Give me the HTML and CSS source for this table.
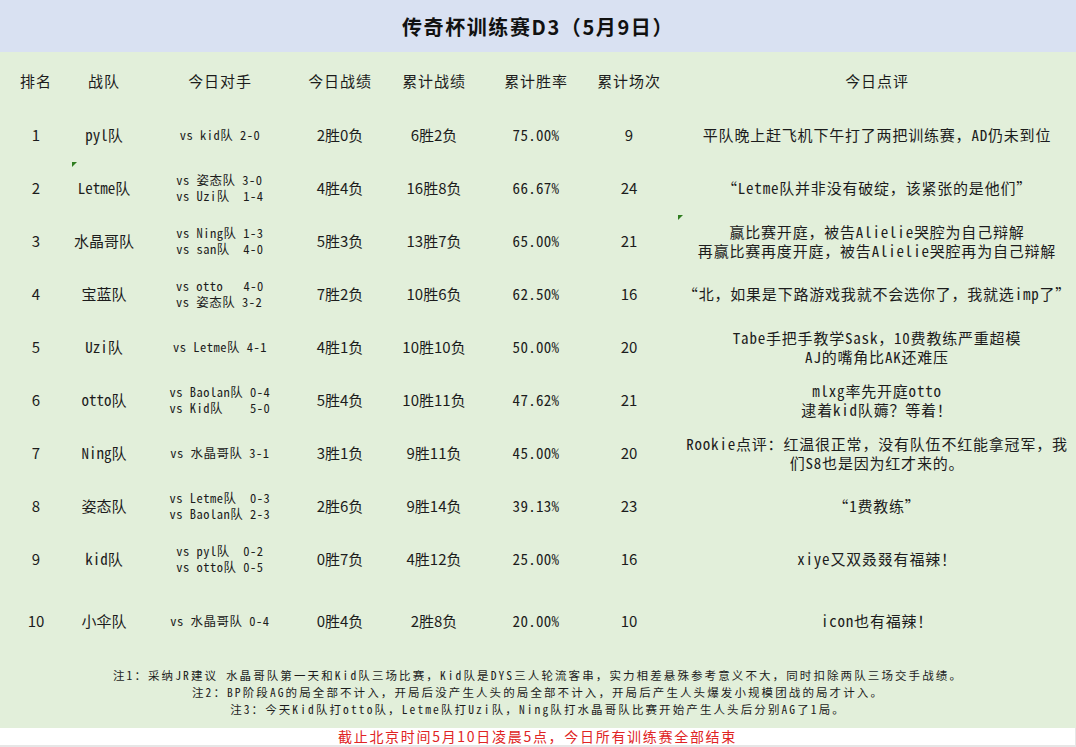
FILE: index.html
```html
<!DOCTYPE html>
<html lang="zh-CN">
<head>
<meta charset="utf-8">
<title>传奇杯训练赛D3</title>
<link rel="stylesheet" href="styles.css">
</head>
<body>
<div class="sheet">
  <div class="title">传奇杯训练赛D3（5月9日）</div>
  <div class="board">
    <div class="table">
      <div class="row head">
        <div class="c">排名</div><div class="c">战队</div><div class="c">今日对手</div><div class="c">今日战绩</div><div class="c">累计战绩</div><div class="c">累计胜率</div><div class="c">累计场次</div><div class="c">今日点评</div>
      </div>
      <div class="row">
        <div class="c num">1</div><div class="c team">pyl队</div><div class="c opp"><span class="vs">vs kid队 2-0</span></div><div class="c rec">2胜0负</div><div class="c rec">6胜2负</div><div class="c pct">75.00%</div><div class="c num">9</div><div class="c note">平队晚上赶飞机下午打了两把训练赛，AD仍未到位</div>
      </div>
      <div class="row">
        <div class="c num">2</div><div class="c team mark">Letme队</div><div class="c opp"><span class="vs">vs 姿态队 3-0
vs Uzi队  1-4</span></div><div class="c rec">4胜4负</div><div class="c rec">16胜8负</div><div class="c pct">66.67%</div><div class="c num">24</div><div class="c note">“Letme队并非没有破绽，该紧张的是他们”</div>
      </div>
      <div class="row">
        <div class="c num">3</div><div class="c team">水晶哥队</div><div class="c opp"><span class="vs">vs Ning队 1-3
vs san队  4-0</span></div><div class="c rec">5胜3负</div><div class="c rec">13胜7负</div><div class="c pct">65.00%</div><div class="c num">21</div><div class="c note mark">赢比赛开庭，被告Alielie哭腔为自己辩解<br>再赢比赛再度开庭，被告Alielie哭腔再为自己辩解</div>
      </div>
      <div class="row">
        <div class="c num">4</div><div class="c team">宝蓝队</div><div class="c opp"><span class="vs">vs otto   4-0
vs 姿态队 3-2</span></div><div class="c rec">7胜2负</div><div class="c rec">10胜6负</div><div class="c pct">62.50%</div><div class="c num">16</div><div class="c note">“北，如果是下路游戏我就不会选你了，我就选imp了”</div>
      </div>
      <div class="row">
        <div class="c num">5</div><div class="c team">Uzi队</div><div class="c opp"><span class="vs">vs Letme队 4-1</span></div><div class="c rec">4胜1负</div><div class="c rec">10胜10负</div><div class="c pct">50.00%</div><div class="c num">20</div><div class="c note">Tabe手把手教学Sask，10费教练严重超模<br>AJ的嘴角比AK还难压</div>
      </div>
      <div class="row">
        <div class="c num">6</div><div class="c team">otto队</div><div class="c opp"><span class="vs">vs Baolan队 0-4
vs Kid队    5-0</span></div><div class="c rec">5胜4负</div><div class="c rec">10胜11负</div><div class="c pct">47.62%</div><div class="c num">21</div><div class="c note">mlxg率先开庭otto<br>逮着kid队薅？等着！</div>
      </div>
      <div class="row">
        <div class="c num">7</div><div class="c team">Ning队</div><div class="c opp"><span class="vs">vs 水晶哥队 3-1</span></div><div class="c rec">3胜1负</div><div class="c rec">9胜11负</div><div class="c pct">45.00%</div><div class="c num">20</div><div class="c note">Rookie点评：红温很正常，没有队伍不红能拿冠军，我<br>们S8也是因为红才来的。</div>
      </div>
      <div class="row">
        <div class="c num">8</div><div class="c team">姿态队</div><div class="c opp"><span class="vs">vs Letme队  0-3
vs Baolan队 2-3</span></div><div class="c rec">2胜6负</div><div class="c rec">9胜14负</div><div class="c pct">39.13%</div><div class="c num">23</div><div class="c note">“1费教练”</div>
      </div>
      <div class="row">
        <div class="c num">9</div><div class="c team">kid队</div><div class="c opp"><span class="vs">vs pyl队  0-2
vs otto队 0-5</span></div><div class="c rec">0胜7负</div><div class="c rec">4胜12负</div><div class="c pct">25.00%</div><div class="c num">16</div><div class="c note">xiye又双叒叕有福辣！</div>
      </div>
      <div class="row last">
        <div class="c num">10</div><div class="c team">小伞队</div><div class="c opp"><span class="vs">vs 水晶哥队 0-4</span></div><div class="c rec">0胜4负</div><div class="c rec">2胜8负</div><div class="c pct">20.00%</div><div class="c num">10</div><div class="c note">icon也有福辣！</div>
      </div>
    </div>
    <div class="notes">
      <p>注1：采纳JR建议 水晶哥队第一天和Kid队三场比赛，Kid队是DYS三人轮流客串，实力相差悬殊参考意义不大，同时扣除两队三场交手战绩。</p>
      <p>注2：BP阶段AG的局全部不计入，开局后没产生人头的局全部不计入，开局后产生人头爆发小规模团战的局才计入。</p>
      <p>注3：今天Kid队打otto队，Letme队打Uzi队，Ning队打水晶哥队比赛开始产生人头后分别AG了1局。</p>
    </div>
  </div>
  <div class="footer">截止北京时间5月10日凌晨5点，今日所有训练赛全部结束</div>
</div>
</body>
</html>
```
FILE: styles.css
```css
html, body {
  margin: 0;
  padding: 0;
  background: #ffffff;
}
body {
  width: 1076px;
  height: 747px;
  overflow: hidden;
  color: #1c1c1c;
  font-family: "Noto Sans CJK SC", "Liberation Sans", sans-serif;
}
.sheet {
  display: flex;
  flex-direction: column;
  width: 1076px;
  height: 747px;
}
.title {
  flex: 0 0 52px;
  background: #d9e1f2;
  display: flex;
  align-items: center;
  justify-content: center;
  font-size: 20px;
  font-weight: bold;
  letter-spacing: 1.6px;
  color: #111;
}
.board {
  flex: 0 0 676px;
  background: #e2efda;
  display: flex;
  flex-direction: column;
}
.row {
  display: grid;
  grid-template-columns: 72px 64px 168px 72px 116px 88px 98px 1fr;
  height: 53px;
}
.row.head {
  height: 56px;
  font-size: 15px;
  letter-spacing: 0.9px;
}
.row.last {
  height: 71px;
}
.c {
  position: relative;
  display: flex;
  align-items: center;
  justify-content: center;
  text-align: center;
  white-space: nowrap;
}
.num {
  font-size: 15px;
}
.rec {
  font-size: 15px;
}
.pct {
  font-family: "Noto Sans Mono CJK SC", "Liberation Mono", "Noto Sans CJK SC", monospace;
  font-size: 15px;
  letter-spacing: 0.3px;
}
.team {
  font-family: "Noto Sans Mono CJK SC", "Liberation Mono", "Noto Sans CJK SC", monospace;
  font-size: 15px;
}
.opp .vs {
  display: inline-block;
  text-align: left;
  white-space: pre;
  font-family: "Noto Sans Mono CJK SC", "Liberation Mono", "Noto Sans CJK SC", monospace;
  font-size: 12.5px;
  letter-spacing: 0.5px;
  line-height: 16px;
}
.note {
  font-family: "Noto Sans Mono CJK SC", "Liberation Mono", "Noto Sans CJK SC", monospace;
  font-size: 15px;
  letter-spacing: 0.8px;
  line-height: 19px;
}
.mark::before {
  content: "";
  position: absolute;
  left: 0;
  top: 1px;
  width: 0;
  height: 0;
  border-top: 5px solid #2f7d1f;
  border-right: 5px solid transparent;
}
.notes {
  padding: 11px 0 10px;
  font-family: "Noto Sans Mono CJK SC", "Liberation Mono", "Noto Sans CJK SC", monospace;
  font-size: 11.5px;
  letter-spacing: 2.1px;
  line-height: 17px;
  text-align: center;
}
.notes p {
  margin: 0;
  white-space: nowrap;
}
.footer {
  flex: 0 0 17px;
  display: flex;
  align-items: center;
  justify-content: center;
  background: #ffffff;
  color: #e02424;
  font-size: 14px;
  line-height: 17px;
  letter-spacing: 1.7px;
  border-bottom: 2px solid #e6e6e6;
  border-right: 1px solid #e6e6e6;
}
```
